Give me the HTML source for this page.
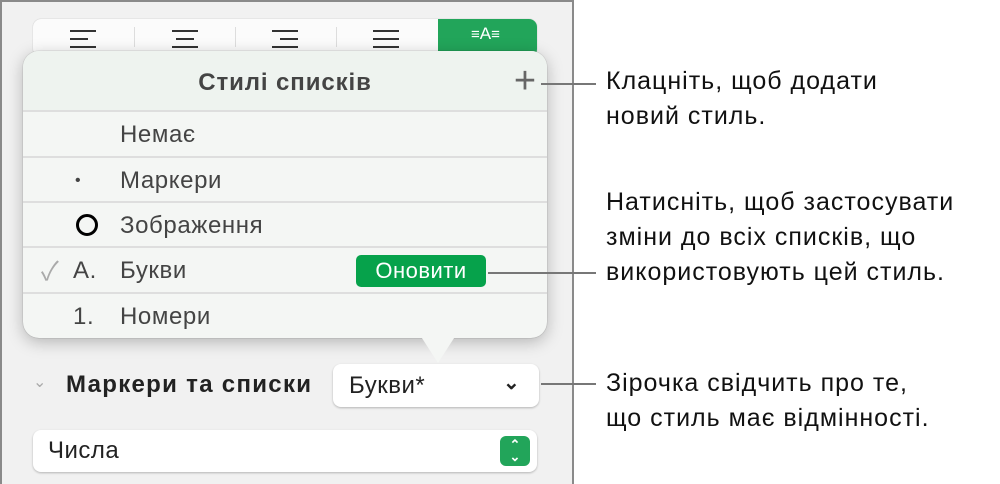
<!DOCTYPE html>
<html><head><meta charset="utf-8"><style>
*{margin:0;padding:0;box-sizing:border-box}
body{width:1000px;height:484px;background:#fff;font-family:"Liberation Sans","Noto Sans CJK SC",sans-serif;position:relative;overflow:hidden}
.panel{position:absolute;left:0;top:0;width:574px;height:484px;background:#f1f1f1;border-left:2px solid #8a8a8a;border-right:2px solid #8a8a8a;border-top:2px solid #8a8a8a}
.seg{position:absolute;left:33px;top:19px;width:504px;height:38px;background:#fbfbfb;border-radius:8px;box-shadow:0 0 1px rgba(0,0,0,.3)}
.seg .sep{position:absolute;top:8px;width:1px;height:20px;background:#ddd}
.seg .on{position:absolute;left:405px;top:0;width:99px;height:38px;background:#22a55a;border-radius:0 8px 8px 0}
.ln{position:absolute;height:2px;background:#333}
.pop{position:absolute;left:23px;top:51px;width:524px;height:287px;background:#f4f6f4;border-radius:16px;box-shadow:0 4px 16px rgba(0,0,0,.25),0 0 1px rgba(0,0,0,.4)}
.hd{position:absolute;left:0;right:0;top:0;height:60px;text-align:center;font-size:24px;letter-spacing:0.9px;line-height:64px;color:#444;font-weight:bold;background:#eef3ef;border-radius:16px 16px 0 0}
.row{position:absolute;left:0;right:0;height:45px;border-top:2px solid #dedede;font-size:24px;letter-spacing:0.6px;color:#444;line-height:46px}
.row .t{position:absolute;left:97px}
.row .m{position:absolute;left:50px}
.tip{position:absolute;left:420px;top:335px;width:0;height:0;border-left:18px solid transparent;border-right:18px solid transparent;border-top:28px solid #f4f6f4}
.cl{position:absolute;height:2px;background:#777}
.note{position:absolute;left:606px;font-size:25px;letter-spacing:1px;line-height:35px;color:#111}
.box{position:absolute;background:#fff;border-radius:8px;box-shadow:0 1px 2px rgba(0,0,0,.25)}
</style></head><body>
<div class="panel"></div>
<div class="seg">
 <div class="sep" style="left:101px"></div><div class="sep" style="left:202px"></div><div class="sep" style="left:303px"></div>
 <div class="on"></div>
</div>
<div class="ln" style="left:70px;top:30px;width:26px"></div><div class="ln" style="left:70px;top:38px;width:18px"></div><div class="ln" style="left:70px;top:46px;width:26px"></div>
<div class="ln" style="left:172px;top:30px;width:26px"></div><div class="ln" style="left:176px;top:38px;width:18px"></div><div class="ln" style="left:172px;top:46px;width:26px"></div>
<div class="ln" style="left:272px;top:30px;width:26px"></div><div class="ln" style="left:280px;top:38px;width:18px"></div><div class="ln" style="left:272px;top:46px;width:26px"></div>
<div class="ln" style="left:373px;top:30px;width:26px"></div><div class="ln" style="left:373px;top:38px;width:26px"></div><div class="ln" style="left:373px;top:46px;width:26px"></div>
<div style="position:absolute;left:471px;top:24px;color:#fff;font-size:15px;line-height:20px">&#8801;<span style="font-size:17px">A</span>&#8801;</div>
<div class="pop">
 <div class="hd">Стилі списків<span style="position:absolute;right:10px;top:-2px;font-size:38px;font-weight:normal;color:#666">+</span></div>
 <div class="row" style="top:59px"><span class="t">Немає</span></div>
 <div class="row" style="top:105px"><span class="m" style="left:52px;font-size:16px">•</span><span class="t">Маркери</span></div>
 <div class="row" style="top:150px"><span class="m" style="left:53px;top:11px;width:22px;height:22px;border:3.5px solid #000;border-radius:50%"></span><span class="t">Зображення</span></div>
 <div class="row" style="top:195px"><span class="m" style="left:18px;color:#aaa;font-size:26px">✓</span><span class="m">A.</span><span class="t">Букви</span>
  <span style="position:absolute;left:333px;top:7px;width:130px;height:32px;background:#06a24b;border-radius:5px;color:#fff;font-size:22px;letter-spacing:0.5px;line-height:32px;text-align:center">Оновити</span></div>
 <div class="row" style="top:241px"><span class="m">1.</span><span class="t">Номери</span></div>
</div>
<div class="tip"></div>
<div style="position:absolute;left:33px;top:372px;color:#aaa;font-size:16px">&#8964;</div>
<div style="position:absolute;left:66px;top:371px;font-size:24px;letter-spacing:1.3px;font-weight:bold;color:#222">Маркери та списки</div>
<div class="box" style="left:333px;top:364px;width:206px;height:43px"><span style="position:absolute;left:16px;top:8px;font-size:24px;letter-spacing:0.5px;color:#222">Букви*</span><span style="position:absolute;left:170px;top:6px;font-size:20px;font-weight:bold;color:#222">&#8964;</span></div>
<div class="box" style="left:33px;top:430px;width:504px;height:42px"><span style="position:absolute;left:15px;top:7px;font-size:24px;letter-spacing:0.5px;color:#222">Числа</span>
 <span style="position:absolute;left:467px;top:6px;width:30px;height:30px;background:#22a55a;border-radius:6px;color:#fff;font-size:13px;line-height:12px;text-align:center;padding-top:3px;font-weight:bold">&#8963;<br>&#8964;</span></div>
<div class="cl" style="left:541px;top:83px;width:55px"></div>
<div class="cl" style="left:488px;top:272px;width:108px"></div>
<div class="cl" style="left:541px;top:383px;width:55px"></div>
<div class="note" style="top:64px">Клацніть, щоб додати<br>новий стиль.</div>
<div class="note" style="top:185px">Натисніть, щоб застосувати<br>зміни до всіх списків, що<br>використовують цей стиль.</div>
<div class="note" style="top:366px">Зірочка свідчить про те,<br>що стиль має відмінності.</div>
</body></html>
